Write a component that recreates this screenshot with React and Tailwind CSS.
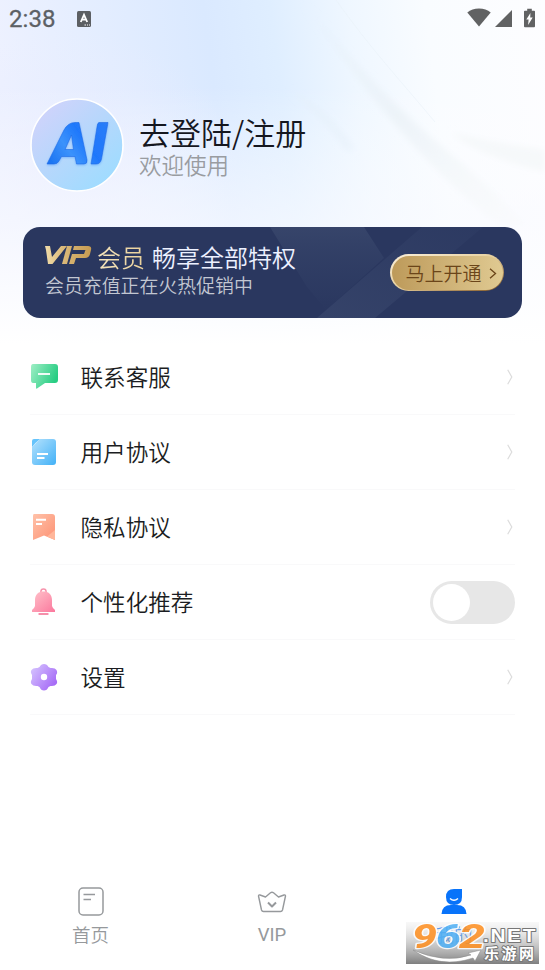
import { useState } from "react";

const CJK = "font-['Noto_Sans_CJK_SC',sans-serif] font-[350]";

function StatusBar() {
  return (
    <div className="flex h-9 items-center justify-between pl-[9px] pr-[10px] pt-[1px]">
      <div className="flex items-center">
        <span className="font-['Roboto',sans-serif] text-[24px] font-normal leading-9 tracking-[0.1px] text-[#5c6065] [-webkit-text-stroke:0.3px_#5c6065]">2:38</span>
        <svg className="ml-[21px]" width="14" height="16" viewBox="0 0 14 16">
          <rect width="14" height="16" rx="1.5" fill="#5c5f63" />
          <path d="M3.8 11L7 3.8L10.2 11M5 8.6H9" fill="none" stroke="#fff" strokeWidth="1.8" />
          <path d="M7.5 14H9M10 14H11M12 14H13" stroke="#fff" strokeWidth="1" />
        </svg>
      </div>
      <div className="flex items-center pb-[2px] text-[#616263]">
        <svg width="24" height="19" viewBox="0 0 24 19" fill="currentColor">
          <path d="M12 18.5L0.3 4.6C3.4 2 7.3.5 12 .5s8.6 1.5 11.7 4.1z" />
        </svg>
        <svg className="ml-1" width="18" height="18" viewBox="0 0 18 18" fill="currentColor">
          <path d="M0 18L17 1V18z" />
        </svg>
        <svg className="ml-[11px]" width="11" height="20" viewBox="0 0 12 20">
          <path d="M3.5 0h5v2H11Q12 2 12 3V19Q12 20 11 20H1Q0 20 0 19V3Q0 2 1 2H3.500z" fill="currentColor" />
          <path d="M7 4.5L2.5 11.5H5L4.5 17.5L9.5 9.5H6.8z" fill="#fff" />
        </svg>
      </div>
    </div>
  );
}

function HeaderBackdrop() {
  return (
    <svg className="absolute left-0 top-0" width="545" height="345" viewBox="0 0 545 345">
      <defs>
        <linearGradient id="sky" x1="0" y1="60" x2="545" y2="-10" gradientUnits="userSpaceOnUse">
          <stop offset="0" stopColor="#edf1ff" />
          <stop offset=".2" stopColor="#e3edff" />
          <stop offset=".38" stopColor="#dae9ff" />
          <stop offset=".5" stopColor="#dfeeff" />
          <stop offset=".64" stopColor="#eff7ff" />
          <stop offset=".78" stopColor="#f9fcff" />
          <stop offset="1" stopColor="#fdfdff" />
        </linearGradient>
        <linearGradient id="fade" x1="0" y1="0" x2="0" y2="1">
          <stop offset=".25" stopColor="#fff" stopOpacity="0" />
          <stop offset=".62" stopColor="#fafbff" stopOpacity=".6" />
          <stop offset="1" stopColor="#fff" />
        </linearGradient>
        <radialGradient id="lilac">
          <stop offset="0" stopColor="#e6eaff" stopOpacity=".9" />
          <stop offset="1" stopColor="#e9edff" stopOpacity="0" />
        </radialGradient>
        <linearGradient id="ray" x1="300" y1="0" x2="510" y2="220" gradientUnits="userSpaceOnUse">
          <stop offset="0" stopColor="#e2edf7" stopOpacity="0" />
          <stop offset=".5" stopColor="#eaf1f6" stopOpacity=".75" />
          <stop offset="1" stopColor="#f7f9fa" stopOpacity=".4" />
        </linearGradient>
        <filter id="soft"><feGaussianBlur stdDeviation="3" /></filter>
      </defs>
      <rect width="545" height="345" fill="url(#sky)" />
      <ellipse cx="70" cy="180" rx="170" ry="150" fill="url(#lilac)" />
      <rect width="545" height="345" fill="url(#fade)" />
      <g filter="url(#soft)">
        <path d="M300 0L316 15C365 75 410 120 440 145C475 175 500 195 525 225L500 225C450 190 375 110 300 0z" fill="url(#ray)" />
        <path d="M290 90C320 105 340 125 355 150L345 150C330 125 310 110 290 90z" fill="#e6f0fa" opacity=".5" />
        <path d="M450 132C480 140 515 145 545 150V172C510 163 475 153 450 132z" fill="#f4f7f8" opacity=".7" />
      </g>
      <path d="M336 0C370 48 400 80 435 122" fill="none" stroke="#e9f1f8" strokeWidth="1" opacity=".6" />
    </svg>
  );
}

function Avatar() {
  return (
    <svg width="94" height="94" viewBox="0 0 94 94">
      <defs>
        <linearGradient id="disc" x1=".1" y1=".1" x2=".85" y2=".9">
          <stop offset="0" stopColor="#d0d3fb" />
          <stop offset=".5" stopColor="#b6d7fc" />
          <stop offset="1" stopColor="#9fdcff" />
        </linearGradient>
        <linearGradient id="ai" x1="17" y1="67" x2="78" y2="24" gradientUnits="userSpaceOnUse">
          <stop offset="0" stopColor="#176ff0" />
          <stop offset=".35" stopColor="#3b92fb" />
          <stop offset=".6" stopColor="#1f78fb" />
          <stop offset="1" stopColor="#2a7cf8" />
        </linearGradient>
        <filter id="glow" x="-20%" y="-20%" width="140%" height="140%">
          <feDropShadow dx="0" dy="1" stdDeviation="1.2" floodColor="#5ea6fb" floodOpacity=".7" />
        </filter>
      </defs>
      <circle cx="47" cy="47" r="46" fill="url(#disc)" stroke="#fff" strokeWidth="1.6" />
      <g fill="url(#ai)" stroke="#1b69e6" strokeWidth=".6" filter="url(#glow)">
        <path fillRule="evenodd" d="M17 66L34 32Q38 24.500 45 24.500H49L57 62Q57.500 66 54 66H46.500L45 58.500H31.500L29 63Q27.500 66 24 66zM35 51.500H43.500L41.500 37z" />
        <path d="M69 24.500H78L71.500 61Q70.500 66 66 66H61L67 29Q67.500 24.500 69 24.500z" />
      </g>
    </svg>
  );
}

function Profile() {
  return (
    <div className="flex items-center gap-[15px] pl-[30px] pt-[62px]">
      <Avatar />
      <div className="pt-[4px]">
        <div className="text-[31px] leading-[34px] text-[#15171f]">去登陆/注册</div>
        <div className="text-[22.5px] leading-[31px] text-[#999ca1]">欢迎使用</div>
      </div>
    </div>
  );
}

function VipCard() {
  return (
    <div className="relative mx-[23px] mt-[35px] flex h-[91px] w-[499px] items-center justify-between overflow-hidden rounded-[17px] bg-[#2a375f] pl-[22px] pr-[18px]">
      <svg className="absolute left-0 top-0" width="499" height="91" viewBox="0 0 499 91">
        <defs>
          <linearGradient id="facet" x1="0" y1="0" x2="0" y2="1">
            <stop offset="0" stopColor="#3a486d" stopOpacity=".8" />
            <stop offset=".75" stopColor="#2f3d64" stopOpacity=".4" />
            <stop offset="1" stopColor="#2a375f" stopOpacity="0" />
          </linearGradient>
          <linearGradient id="beam" x1="0" y1="1" x2="1" y2="0">
            <stop offset="0" stopColor="#3d4b70" stopOpacity=".6" />
            <stop offset="1" stopColor="#2f3d65" stopOpacity=".5" />
          </linearGradient>
        </defs>
        <path d="M247 0H341L361 31L294 91H310L284 60z" fill="url(#facet)" />
        <path d="M399 0H460L352 91H294z" fill="url(#beam)" />
      </svg>
      <div className="relative pb-[7px]">
        <div className="flex h-[30px] items-center">
          <svg className="mb-[3px]" width="47" height="20" viewBox="0 0 47 20">
            <defs>
              <linearGradient id="gold" x1="0" y1="0" x2="47" y2="0" gradientUnits="userSpaceOnUse">
                <stop offset="0" stopColor="#f0dcaa" />
                <stop offset=".4" stopColor="#dab878" />
                <stop offset="1" stopColor="#c59a50" />
              </linearGradient>
            </defs>
            <g fill="url(#gold)">
              <path d="M0 1H5L7 12L16 1H22L7.500 19H3L1 5z" />
              <path d="M22 1H27L22 19H17z" />
              <path d="M29 1H43Q47 1 46 5L45 9Q44 13 40 13H31L29 19H24L27 9H39L40.500 5H28z" />
            </g>
          </svg>
          <span className="ml-[5px] bg-gradient-to-r from-[#f4e4bd] to-[#e9d09a] bg-clip-text text-[24px] leading-[32px] text-transparent">会员</span>
          <span className="ml-[7px] text-[24px] leading-[32px] text-[#edf1ff]">畅享全部特权</span>
        </div>
        <div className="text-[18.900px] leading-[25px] text-[#c2c6d1]">会员充值正在火热促销中</div>
      </div>
      <button className="relative flex h-[37px] w-[114px] items-center rounded-full bg-gradient-to-br from-[#fbf0dc] via-[#e6cf9d] to-[#805724] p-[1.500px]">
        <span className="flex h-full w-full items-center rounded-full bg-gradient-to-r from-[#bd9a5a] to-[#e0ca92] pl-[14px] pt-[1px] text-[19px] text-[#6b4519]">
          马上开通
          <svg className="ml-[7px]" width="8" height="11" viewBox="0 0 8 11">
            <path d="M1 .7L6.500 5.500L1 10.300" fill="none" stroke="#6b4519" strokeWidth="1.300" />
          </svg>
        </span>
      </button>
    </div>
  );
}

function ChatIcon() {
  return (
    <svg width="28" height="28" viewBox="0 0 28 28">
      <defs>
        <linearGradient id="green" x1="0" y1="0" x2="1" y2=".4">
          <stop offset="0" stopColor="#9eeec5" />
          <stop offset="1" stopColor="#28cd83" />
        </linearGradient>
      </defs>
      <path d="M3 1H25Q28 1 28 4V17Q28 20 25 20H15L7 25.500Q6 26 6 25V20H3Q1 20 1 17V4Q1 1 3 1z" fill="url(#green)" />
      <path d="M8 11H20" stroke="#fff" strokeWidth="1.800" />
    </svg>
  );
}

function DocIcon() {
  return (
    <svg width="28" height="28" viewBox="0 0 28 28">
      <defs>
        <linearGradient id="blue" x1="0" y1="0" x2="1" y2="1">
          <stop offset="0" stopColor="#b5e2fd" />
          <stop offset="1" stopColor="#42b1f7" />
        </linearGradient>
      </defs>
      <path d="M2 9L10 1H23Q26 1 26 4V24Q26 27 23 27H5Q2 27 2 24z" fill="url(#blue)" />
      <path d="M2 9V3Q2 1 4 1H10Q6 4 2 9z" fill="#66c4fc" />
      <path d="M7 16H18M7 20H14.500" stroke="#fff" strokeWidth="2" />
    </svg>
  );
}

function BookmarkIcon() {
  return (
    <svg width="28" height="28" viewBox="0 0 28 28">
      <defs>
        <linearGradient id="orange" x1="0" y1="0" x2="1" y2="1">
          <stop offset="0" stopColor="#ffc2a9" />
          <stop offset="1" stopColor="#fd9173" />
        </linearGradient>
      </defs>
      <path d="M4 1H22Q25 1 25 4V27L14 22.500L3 27V3Q3 1 4 1z" fill="url(#orange)" />
      <path d="M25 17V27L17 23.500z" fill="#ffb69a" />
      <path d="M6 6.800H16M6 11H12" stroke="#fff" strokeWidth="1.900" />
    </svg>
  );
}

function BellIcon() {
  return (
    <svg width="28" height="28" viewBox="0 0 28 28">
      <defs>
        <linearGradient id="pink" x1="0" y1="0" x2="1" y2="1">
          <stop offset="0" stopColor="#ffc2ca" />
          <stop offset="1" stopColor="#fb789d" />
        </linearGradient>
      </defs>
      <circle cx="13.500" cy="3.500" r="2.600" fill="none" stroke="#f794ad" strokeWidth="1.500" />
      <path d="M5 12C5 6 9 3.500 13.500 3.500S22 6 22 12V18Q22.500 20 25 22V24H2V22Q4.500 20 5 18z" fill="url(#pink)" />
      <rect x="8.500" y="25" width="10" height="2" rx=".5" fill="#f68eaa" />
    </svg>
  );
}

function GearIcon() {
  return (
    <svg width="28" height="28" viewBox="0 0 28 28">
      <defs>
        <linearGradient id="purple" x1="0" y1="0" x2="1" y2=".7">
          <stop offset="0" stopColor="#d8c9ff" />
          <stop offset="1" stopColor="#a569f6" />
        </linearGradient>
      </defs>
      <path d="M14 1Q17 1 18.500 4L20.500 5Q25 4.500 26.500 7Q28 10 26 12V16Q28 19 26.500 21Q25 23.500 20.500 23L18.500 24Q17 27.500 14 27.500T9.500 24L7.500 23Q3 23.500 1.500 21Q0 19 2 16V12Q0 9 1.500 7Q3 4.500 7.500 5L9.500 4Q11 1 14 1z" fill="url(#purple)" />
      <circle cx="14" cy="14" r="3.200" fill="#fff" />
    </svg>
  );
}

function Toggle() {
  const [on, setOn] = useState(false);

  return (
    <button
      role="switch"
      aria-checked={on}
      onClick={() => setOn(!on)}
      className={`flex h-[43px] w-[85px] items-center rounded-full px-[3px] ${on ? "justify-end bg-[#0a7cff]" : "bg-[#e7e7e7]"}`}
    >
      <span className="h-[37px] w-[37px] rounded-full bg-white" />
    </button>
  );
}

const items = [
  { label: "联系客服", icon: ChatIcon },
  { label: "用户协议", icon: DocIcon },
  { label: "隐私协议", icon: BookmarkIcon },
  { label: "个性化推荐", icon: BellIcon, toggle: true },
  { label: "设置", icon: GearIcon },
];

function Menu() {
  return (
    <div className="mt-[22px] px-[30px]">
      {items.map(({ label, icon: Icon, toggle }) => (
        <div key={label} className="flex h-[75px] items-center border-b border-[#f9f9fa]">
          <Icon />
          <span className="ml-[22.500px] flex-1 text-[22.600px] text-[#1b1d22]">{label}</span>
          {toggle ? (
            <Toggle />
          ) : (
            <svg className="mr-[2px]" width="6" height="16" viewBox="0 0 6 16">
              <path d="M.7 .8L4.800 8L.7 15.200" fill="none" stroke="#dcdcdc" strokeWidth="1.200" />
            </svg>
          )}
        </div>
      ))}
    </div>
  );
}

function TabBar() {
  return (
    <nav className="mt-auto flex h-[92px] text-[#96999c]">
      <div className="flex w-[181px] flex-col items-center pt-[9px]">
        <svg width="26" height="29" viewBox="0 0 26 29" fill="none" stroke="currentColor">
          <rect x="1" y="1" width="24" height="27" rx="4" strokeWidth="1.500" />
          <path d="M5.500 7.500H17M5.500 12.500H13" strokeWidth="1.700" />
        </svg>
        <span className="mt-[5px] text-[18.500px] leading-[26px]">首页</span>
      </div>
      <div className="flex w-[182px] flex-col items-center pt-[9px]">
        <svg width="30" height="29" viewBox="0 0 30 29" fill="none" stroke="currentColor" strokeLinejoin="round">
          <path d="M1.500 9Q1.500 7.500 3 8L8.500 10L13.500 5.800Q15 4.500 16.500 5.800L21.500 10L27 8Q28.500 7.500 28.500 9L25.500 23Q25 24.500 23.500 24.500H6.500Q5 24.500 4.500 23z" strokeWidth="1.400" />
          <path d="M11 15.500L15 19.500L19 15.500" strokeWidth="2" />
        </svg>
        <span className="mt-[6px] font-['Roboto',sans-serif] text-[18.500px] font-normal leading-[26px]">VIP</span>
      </div>
      <div className="flex w-[182px] flex-col items-center pt-[9px] text-[#0873fa]">
        <svg width="26" height="29" viewBox="0 0 26 29">
          <path d="M5 10Q5 2 13 2H21V10Q21 18 13 18T5 10z" fill="currentColor" />
          <path d="M.5 27Q1 18 10 18H16Q25 18 25.500 27z" fill="currentColor" />
          <path d="M9 11.500Q13 15 17 11.500" fill="none" stroke="#fff" strokeWidth="1.500" />
        </svg>
        <span className="mt-[5px] text-[18.500px] leading-[26px]">我的</span>
      </div>
    </nav>
  );
}

function Watermark() {
  return (
    <svg className="absolute left-[406px] top-[922px] overflow-visible" width="133" height="42" viewBox="0 0 133 42">
      <defs>
        <linearGradient id="plate" x1="0" y1="0" x2="0" y2="1">
          <stop offset="0" stopColor="#e8e8e8" stopOpacity=".3" />
          <stop offset="1" stopColor="#7c7c7c" stopOpacity=".98" />
        </linearGradient>
      </defs>
      <rect width="133" height="42" fill="url(#plate)" />
      <g fontFamily="Roboto, sans-serif" fontWeight="800" fontStyle="italic" fontSize="34" stroke="#fff" strokeWidth="2.500" strokeLinejoin="round" paintOrder="stroke" opacity=".85">
        <text x="6" y="26" textLength="25" lengthAdjust="spacingAndGlyphs" fill="#ff8f1f">9</text>
        <text x="30" y="26" textLength="25" lengthAdjust="spacingAndGlyphs" fill="#4fb0f5">6</text>
        <text x="53" y="26" textLength="26" lengthAdjust="spacingAndGlyphs" fill="#ff8f1f">2</text>
      </g>
      <g fill="#fff" stroke="#777" strokeWidth="2" strokeLinejoin="round" paintOrder="stroke" fontWeight="700">
        <text x="77" y="20" textLength="54" lengthAdjust="spacingAndGlyphs" fontFamily="Liberation Sans, sans-serif" fontSize="19" letterSpacing="1.500">.NET</text>
        <text x="78" y="37" textLength="50" fontFamily="Noto Sans CJK SC, sans-serif" fontSize="15">乐游网</text>
      </g>
      <path d="M7 28Q38 42 65 33L62 31L75 28L69 39L67 36Q34 47 7 28z" fill="#fff" stroke="#888" strokeWidth=".5" />
    </svg>
  );
}

export default function App() {
  return (
    <main className={`relative h-[970px] w-[545px] overflow-hidden bg-white ${CJK}`}>
      <HeaderBackdrop />
      <div className="relative flex h-full flex-col">
        <StatusBar />
        <Profile />
        <VipCard />
        <Menu />
        <TabBar />
      </div>
      <Watermark />
    </main>
  );
}
